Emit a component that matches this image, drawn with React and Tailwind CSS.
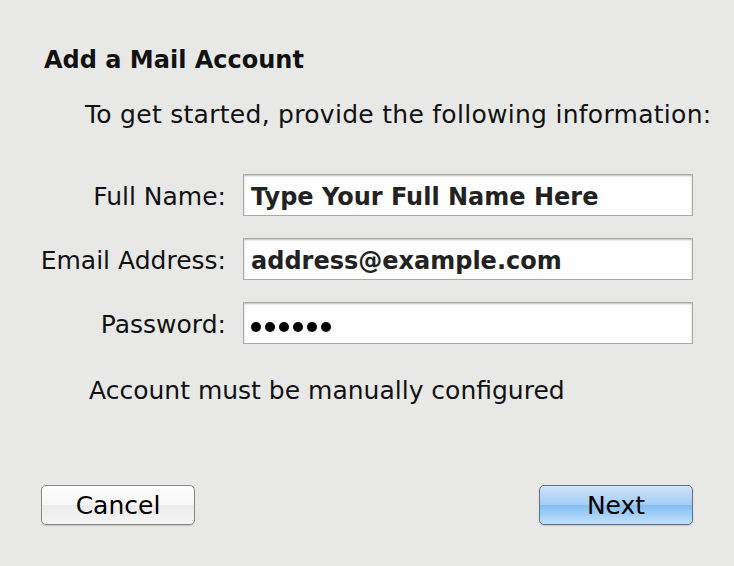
export default function App() {
  const fields = [
    { label: 'Full Name:', value: 'Type Your Full Name Here' },
    { label: 'Email Address:', value: 'address@example.com' },
    { label: 'Password:', value: '', dots: true },
  ];

  return (
    <div className="w-[734px] h-[566px] bg-[#e8e9e7] text-[#111] font-['DejaVu_Sans',sans-serif] overflow-hidden">
      <div className="pl-[44px] pt-[45px]">
        <h1 className="text-[24px] leading-[30px] font-bold">Add a Mail Account</h1>
      </div>
      <p className="pl-[85px] mt-[25px] text-[25px] leading-[30px] tracking-[0.28px] whitespace-nowrap">
        To get started, provide the following information:
      </p>

      <div className="mt-[44px] grid grid-cols-[226px_450px] gap-x-[17px] gap-y-[22px] items-start">
        {fields.map((f) => (
          <div key={f.label} className="contents">
            <label className="h-[42px] pt-[8px] text-right text-[25px] leading-[30px] whitespace-nowrap">{f.label}</label>
            <div className="h-[42px] bg-[#fefefe] border border-[#a9aaa8] shadow-[inset_0_1px_2px_rgba(0,0,0,0.25)] pl-[7px]">
              {f.dots ? (
                <div className="flex gap-[4px] pt-[19px]">
                  {[0, 1, 2, 3, 4, 5].map((i) => (
                    <span key={i} className="w-[10px] h-[10px] rounded-full bg-black" />
                  ))}
                </div>
              ) : (
                <div className="pt-[7px] text-[24px] leading-[30px] font-bold text-[#222] whitespace-nowrap">{f.value}</div>
              )}
            </div>
          </div>
        ))}
      </div>

      <p className="pl-[89px] mt-[32px] text-[25px] leading-[30px] whitespace-nowrap">Account must be manually configured</p>

      <div className="flex justify-between px-[41px] mt-[79px]">
        <button className="w-[154px] h-[40px] rounded-[5px] border border-[#8a8a8a] bg-[linear-gradient(#ffffff,#f6f6f6_50%,#ebebeb_51%,#f4f4f4)] shadow-[0_1px_1px_rgba(0,0,0,0.15)] text-[25px] leading-none text-black">
          Cancel
        </button>
        <button className="w-[154px] h-[40px] rounded-[5px] border border-[#5f6f8a] bg-[linear-gradient(#cfe4fa,#a4cdf6_50%,#84bff3_51%,#c2e2fc)] shadow-[0_1px_1px_rgba(0,0,0,0.15)] text-[25px] leading-none text-black">
          Next
        </button>
      </div>
    </div>
  );
}
